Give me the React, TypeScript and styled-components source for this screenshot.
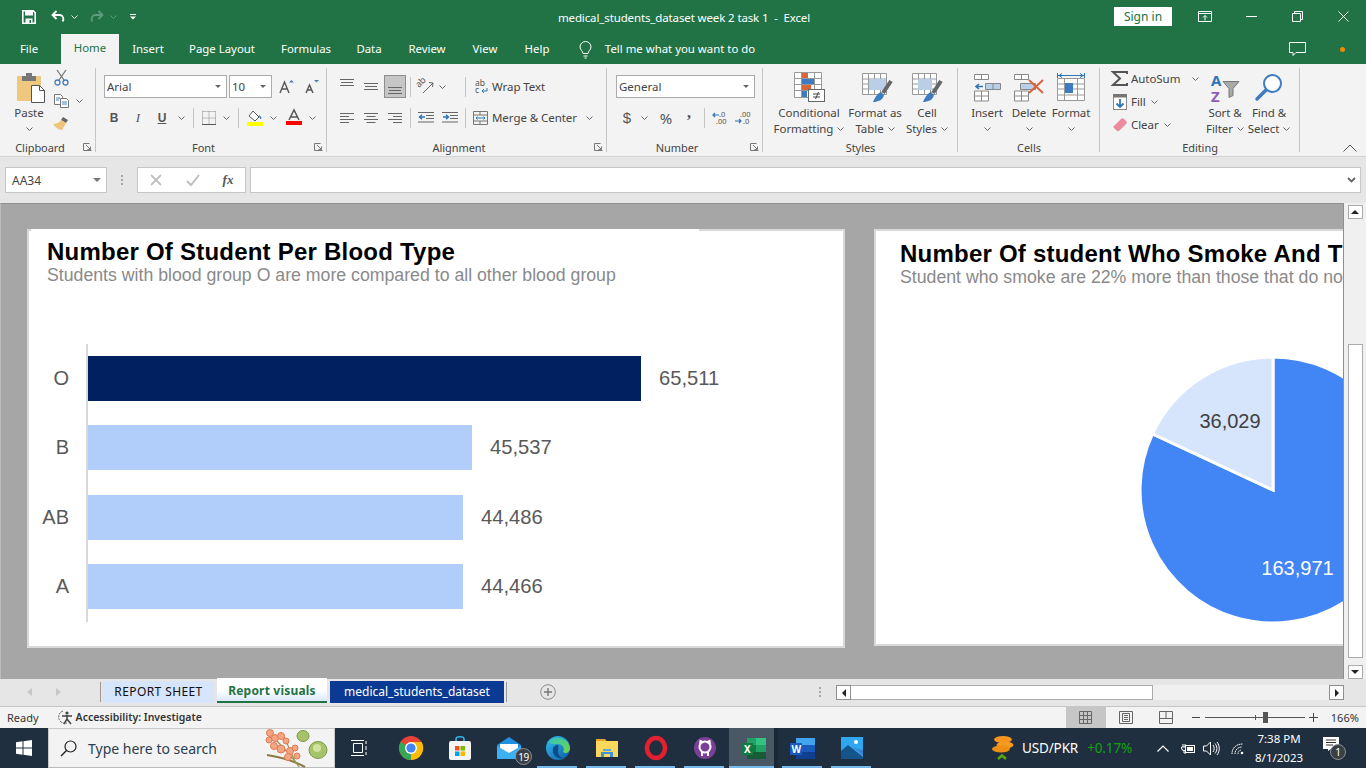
import React from "react";
import styled, { createGlobalStyle } from "styled-components";

const Global = createGlobalStyle`
  html, body { margin: 0; padding: 0; overflow: hidden; background: #e6e6e6; }
  #root { width: 1366px; height: 768px; }
  * { box-sizing: border-box; }
  svg { display: block; flex-shrink: 0; overflow: visible; }
`;
const UI = `"Noto Sans", "Open Sans", sans-serif`;
const Page = styled.div`
  width: 1366px; height: 768px; display: flex; flex-direction: column; overflow: hidden;
  font-family: ${UI}; font-size: 11.5px; color: #333;
`;

/* generic flow slot */
const Slot = styled.div<{ $w: number; $ml?: number }>`
  width: ${(p) => p.$w}px; margin-left: ${(p) => p.$ml ?? 0}px; flex-shrink: 0;
  display: flex; align-items: center; justify-content: center;
`;

/* title bar */
const TitleBar = styled.header`
  height: 35px; background: #217346; display: flex; align-items: center; color: #fff; padding-bottom: 2px;
`;
const QuickTools = styled.div`width: 466px; display: flex; align-items: center; height: 100%; padding-left: 19px;`;
const WindowTitle = styled.div`width: 436px; padding-top: 1px; font-size: 11.5px; text-align: center; white-space: pre; letter-spacing: -0.011em;`;
const SignIn = styled.div`
  width: 58px; height: 19px; margin-left: 212px; background: #fff; color: #217346; display: flex; align-items: center;
  justify-content: center; font-size: 12px;
`;
const TabBar = styled.nav`
  height: 29px; background: #217346; display: flex; align-items: stretch; color: #fff; font-size: 11.4px;
`;
const RibbonTab = styled.div<{ $w: number; $ml: number; $active?: boolean }>`
  width: ${(p) => p.$w}px; margin-left: ${(p) => p.$ml}px; display: flex; align-items: center; justify-content: center;
  white-space: nowrap; flex-shrink: 0; padding-bottom: 3px;
  background: ${(p) => (p.$active ? "#f3f3f3" : "transparent")}; color: ${(p) => (p.$active ? "#217346" : "#fff")};
  margin-top: ${(p) => (p.$active ? "-1px" : "0")};
`;

/* ribbon */
const Ribbon = styled.div`
  height: 93px; background: #f3f3f3; display: flex; border-bottom: 1px solid #d2d2d2; position: relative;
`;
const Group = styled.section<{ $w: number }>`
  width: ${(p) => p.$w}px; flex-shrink: 0; display: flex; flex-direction: column; position: relative;
  &::after { content: ""; position: absolute; right: 0; top: 4px; height: 84px; width: 1px; background: #c6c6c6; }
`;
const GroupBody = styled.div<{ $pl?: number }>`
  height: 76px; padding-left: ${(p) => p.$pl ?? 0}px; padding-top: 11px; display: flex; flex-direction: column; gap: 8px;
`;
const LargeBody = styled.div<{ $pl?: number }>`
  height: 76px; padding-left: ${(p) => p.$pl ?? 0}px; display: flex;
`;
const ClipTools = styled.div`display: flex; flex-direction: column; padding-top: 6px; gap: 8px;`;
const ClipRow = styled.div`display: flex; align-items: center;`;
const Row = styled.div`height: 23px; display: flex; align-items: center;`;
const GroupFoot = styled.footer`height: 16px; display: flex; align-items: center; font-size: 11px; color: #444; padding-bottom: 2px;`;
const GroupName = styled.div`flex: 1; text-align: center; white-space: nowrap; letter-spacing: -0.005em;`;
const Launcher = styled.div`width: 16px; padding-left: 3px;`;
const Combo = styled.div<{ $w: number; $ml?: number }>`
  width: ${(p) => p.$w}px; margin-left: ${(p) => p.$ml ?? 0}px; height: 23px; flex-shrink: 0; background: #fff; border: 1px solid #ababab;
  display: flex; align-items: center; justify-content: space-between; padding: 0 5px 0 2px; font-size: 11.5px; color: #444;
`;
const Caret = styled.div`width: 0; height: 0; border-left: 3px solid transparent; border-right: 3px solid transparent; border-top: 3px solid #666;`;
const NameCaret = styled(Caret)`border-left-width: 4px; border-right-width: 4px; border-top: 4px solid #777; margin-right: 5px;`;
const VSep = styled.div<{ $ml: number }>`width: 1px; height: 20px; background: #c6c6c6; margin-left: ${(p) => p.$ml}px; flex-shrink: 0;`;
const Selected = styled.div<{ $ml: number }>`
  width: 22px; height: 23px; margin-left: ${(p) => p.$ml}px; background: #c6c6c6; border: 1px solid #8e8e8e; display: flex;
  align-items: flex-end; justify-content: center; padding-bottom: 3px; flex-shrink: 0;
`;
const TopSlot = styled(Slot)`align-self: flex-start; padding-top: 4px;`;
const Label = styled.span<{ $ml?: number }>`margin-left: ${(p) => p.$ml ?? 0}px; white-space: nowrap; font-size: 11.5px; color: #444; letter-spacing: -0.005em;`;
const Currency = styled.span`font-family: "Liberation Sans", sans-serif; font-size: 15px; color: #555;`;
const Percent = styled.span`font-size: 15px; color: #555;`;
const Comma = styled.span`font-family: "Liberation Serif", serif; font-weight: 700; font-size: 16px; color: #555; line-height: 10px; margin-bottom: 9px;`;
const FxGlyph = styled.span`font-family: "Liberation Serif", serif; font-style: italic; font-weight: 700; font-size: 13px; color: #555;`;
const Big = styled.div<{ $w: number; $ml?: number }>`
  width: ${(p) => p.$w}px; margin-left: ${(p) => p.$ml ?? 0}px; flex-shrink: 0; display: flex; flex-direction: column; align-items: center;
  padding-top: 8px; text-align: center; color: #444; font-size: 11.5px; line-height: 16px;
`;
const BigIcon = styled.div<{ $shift?: number }>`height: 31px; margin-bottom: 2px; margin-left: ${(p) => p.$shift ?? 0}px; display: flex; align-items: center; justify-content: center;`;
const BigLine = styled.div`display: flex; align-items: center; justify-content: center; gap: 4px; height: 16px; white-space: nowrap; letter-spacing: -0.005em;`;
const EditColumn = styled.div`width: 103px; display: flex; flex-direction: column; padding-top: 3px;`;
const EditRow = styled.div`height: 23px; display: flex; align-items: center; padding-left: 12px;`;
const Collapse = styled.div`position: absolute; right: 9px; bottom: 4px;`;

/* formula bar */
const FormulaBar = styled.div`
  height: 46px; background: #e6e6e6; display: flex; align-items: center; padding-left: 5px;
`;
const FieldBox = styled.div<{ $w: number; $ml?: number }>`
  width: ${(p) => p.$w}px; height: 26px; margin-left: ${(p) => p.$ml ?? 0}px; background: #fff; border: 1px solid #c6c6c6; flex-shrink: 0;
  display: flex; align-items: center; color: #444; font-size: 12px;
`;
const NameText = styled.span`margin-left: 6px; flex: 1;`;
const InputBox = styled(FieldBox)`justify-content: flex-end; padding-right: 4px;`;
const Grip = styled.div<{ $ml: number }>`
  width: 2px; height: 10px; margin-left: ${(p) => p.$ml}px; flex-shrink: 0;
  background: repeating-linear-gradient(#a6a6a6 0 2px, transparent 2px 4px);
`;

/* sheet */
const SheetRow = styled.div`height: 476px; display: flex; background: #f0f0f0;`;
const Canvas = styled.main`
  width: 1344px; height: 476px; background: #a6a6a6; overflow: hidden; display: flex; align-items: flex-start;
  padding: 25px 0 0 26px; gap: 29px; border-top: 1px solid #8f8f8f; border-left: 1px solid #bcbcbc; border-right: 1px solid #8f8f8f;
`;
const Card = styled.article<{ $w: number; $h: number }>`
  width: ${(p) => p.$w}px; height: ${(p) => p.$h}px; flex-shrink: 0; background: #fff; border: 2px solid #d9d9d9;
  font-family: "Liberation Sans", Arial, sans-serif; position: relative;
`;
const CardEdge = styled.div`position: absolute; left: 2px; top: -2px; width: 668px; height: 2px; background: #fff;`;
const CardTitle = styled.h2<{ $pt: number; $pl: number }>`
  margin: 0; padding: ${(p) => p.$pt}px 0 0 ${(p) => p.$pl}px; font-size: 24px; line-height: 28px; font-weight: 700; color: #000; white-space: nowrap; letter-spacing: 0.0094em;
`;
const CardSub = styled.p<{ $pl: number }>`
  margin: 0; padding-left: ${(p) => p.$pl}px; font-size: 17.72px; line-height: 18px; color: #8a8a8a; white-space: nowrap;
`;
const Chart = styled.div`display: flex; flex-direction: column; margin: 60px 0 0 57px; border-left: 2px solid #d9d9d9; padding: 12px 0 13px; gap: 24px; height: 278px; position: relative;`;
const BarRow = styled.div`
  height: 45px; display: flex; align-items: center; position: relative;
  &:nth-child(3) { margin-top: 1px; }
`;
const Bar = styled.div<{ $dark?: boolean }>`height: 45px; background: ${(p) => (p.$dark ? "#00205f" : "#b1cdf9")};`;
const BarValue = styled.span`margin-left: 18px; font-size: 20.2px; color: #595959;`;
const BarName = styled.span`position: absolute; right: calc(100% + 19px); font-size: 20px; color: #595959;`;
const PieBox = styled.div`margin: 69px 0 0 262px; width: 272px;`;

const ScrollV = styled.aside`width: 22px; display: flex; flex-direction: column; align-items: center; padding: 2px 0 0;`;
const ScrollBtn = styled.div`
  width: 15px; height: 14px; background: #fff; border: 1px solid #ababab; display: flex; align-items: center; justify-content: center; flex-shrink: 0;
`;
const ThumbV = styled.div`width: 15px; height: 314px; margin-top: 125px; background: #fff; border: 1px solid #ababab; flex-shrink: 0;`;
const ScrollBtnEnd = styled(ScrollBtn)`margin-top: auto; margin-bottom: 0;`;

/* sheet tabs */
const TabStrip = styled.div`
  height: 28px; background: #e6e6e6; display: flex; align-items: flex-start; border-bottom: 1px solid #c6c6c6; position: relative; font-size: 12px;
`;
const SheetTab = styled.div<{ $w: number; $ml: number; $bg: string; $fg: string; $bold?: boolean; $ls?: number }>`
  width: ${(p) => p.$w}px; margin-left: ${(p) => p.$ml}px; height: 22px; margin-top: 2px; background: ${(p) => p.$bg}; color: ${(p) => p.$fg};
  font-weight: ${(p) => (p.$bold ? 700 : 400)}; letter-spacing: ${(p) => p.$ls ?? 0}px; padding-bottom: 1px;
  display: flex; align-items: center; justify-content: center; flex-shrink: 0; white-space: nowrap;
`;
const ActiveTab = styled(SheetTab)`
  height: 25px; margin-top: -1px; padding-bottom: 0; padding-top: 2px; background: linear-gradient(#fff 55%, #dbe7fb); border-bottom: 2px solid #217346;
`;
const StripSep = styled.div<{ $ml: number }>`width: 1px; height: 20px; margin: 3px 0 0 ${(p) => p.$ml}px; background: #9a9a9a; flex-shrink: 0;`;
const StripItem = styled.div<{ $w: number; $ml: number }>`
  width: ${(p) => p.$w}px; margin-left: ${(p) => p.$ml}px; height: 26px; display: flex; align-items: center; justify-content: center; flex-shrink: 0;
`;
const HScroll = styled.div`width: 508px; margin-left: 15px; margin-top: 6px; height: 15px; display: flex; flex-shrink: 0;`;
const HBtn = styled.div`width: 15px; height: 15px; background: #fff; border: 1px solid #8f8f8f; display: flex; align-items: center; justify-content: center; flex-shrink: 0;`;
const HThumb = styled.div`width: 302px; height: 15px; background: #fff; border: 1px solid #ababab; border-left: 0; flex-shrink: 0;`;
const HTrack = styled.div`flex: 1; background: #f0f0f0;`;

/* status bar */
const StatusBar = styled.div`height: 21px; background: #f3f3f3; display: flex; align-items: center; font-size: 11px; color: #333; padding-bottom: 1px;`;
const StatusText = styled.span<{ $ml: number; $bold?: boolean }>`
  margin-left: ${(p) => p.$ml}px; white-space: nowrap; font-weight: ${(p) => (p.$bold ? 600 : 400)}; font-size: ${(p) => (p.$bold ? "10.5px" : "11px")};
`;
const ViewBtn = styled.div<{ $on?: boolean; $ml?: number }>`
  width: 40px; height: 21px; margin-left: ${(p) => p.$ml ?? 0}px; margin-top: 1px; background: ${(p) => (p.$on ? "#c6c6c6" : "transparent")};
  display: flex; align-items: center; justify-content: center; flex-shrink: 0;
`;
const Zoom = styled.div<{ $ml: number }>`margin-left: ${(p) => p.$ml}px; width: 100px; height: 1px; background: #555; position: relative; flex-shrink: 0;`;
const ZoomThumb = styled.div`position: absolute; left: 58px; top: -5px; width: 5px; height: 11px; background: #555;`;
const ZoomTick = styled.div`position: absolute; left: 50px; top: -2px; width: 1px; height: 5px; background: #555;`;

/* taskbar */
const Taskbar = styled.footer`height: 40px; background: #202f3f; display: flex; align-items: stretch; color: #fff; font-size: 12px;`;
const StartBtn = styled.div`width: 48px; display: flex; align-items: center; justify-content: center;`;
const Search = styled.div`
  width: 287px; background: #f3f3f3; border: 1px solid #c8c8c8; border-bottom-color: #bbb; display: flex; align-items: center; color: #2c3e50; padding-left: 11px; font-size: 14px; position: relative;
`;
const SearchText = styled.span`margin-left: 11px;`;
const SearchArt = styled.div`margin-left: auto; margin-right: 4px;`;
const TaskItem = styled.div<{ $on?: boolean; $active?: boolean; $ml?: number }>`
  width: 49px; margin-left: ${(p) => p.$ml ?? 0}px; display: flex; align-items: center; justify-content: center; position: relative; flex-shrink: 0;
  background: ${(p) => (p.$active ? "linear-gradient(90deg, #4a5866 0 45px, #1a2836 45px)" : "transparent")};
  &::after {
    content: ""; display: ${(p) => (p.$on ? "block" : "none")}; position: absolute; bottom: 0; left: ${(p) => (p.$active ? "0" : "4px")};
    width: ${(p) => (p.$active ? "45px" : "40px")}; height: 2px; background: #76b9ed;
  }
`;
const Badge = styled.div`
  position: absolute; right: 1px; bottom: 3px; width: 17px; height: 17px; border-radius: 50%; background: #3a3f45; border: 1px solid #8b8f94;
  color: #fff; font-size: 10px; display: flex; align-items: center; justify-content: center; letter-spacing: -0.05em;
`;
const Tray = styled.div`margin-left: auto; display: flex; align-items: center; height: 100%; width: 376px; position: relative;`;
const Ticker = styled.span<{ $ml: number; $c: string }>`margin-left: ${(p) => p.$ml}px; color: ${(p) => p.$c}; font-size: 13.5px; white-space: nowrap; letter-spacing: -0.01em;`;
const Clock = styled.div`width: 58px; margin-left: 6px; flex-shrink: 0; text-align: center; line-height: 19px; font-size: 11.5px; white-space: nowrap; display: flex; flex-direction: column; align-items: center;`;
const Notify = styled.div`margin-left: 15px; position: relative; width: 20px; height: 22px;`;
const NotifyBadge = styled.div`
  position: absolute; left: 7px; top: 7px; width: 16px; height: 16px; border-radius: 50%; background: #3a3f45; border: 1px solid #8b8f94; color: #fff; font-size: 10px;
  display: flex; align-items: center; justify-content: center;
`;

/* ---------- icons ---------- */
const Chev = ({ c = "#666" }: { c?: string }) => (
  <svg width="7" height="4" viewBox="0 0 7 4"><path d="M.5.5l3 3 3-3" fill="none" stroke={c} /></svg>
);
const Launch = () => (
  <svg width="9" height="8" viewBox="0 0 9 8"><path d="M8.5 7.5H.5V.5h6M3 2l4 4M7.5 3.5v3h-3" fill="none" stroke="#777" /></svg>
);
const Save = () => (
  <svg width="14" height="14" viewBox="0 0 14 14"><path d="M.8.8h10.4l2 2v10.4H.8z" fill="none" stroke="#fff" strokeWidth="1.6" /><rect x="3" y="1" width="8" height="4.5" fill="#fff" /><rect x="3.5" y="8.5" width="7" height="5" fill="#fff" /><rect x="7.5" y="10" width="1.6" height="3" fill="#217346" /></svg>
);
const Undo = ({ c = "#fff" }: { c?: string }) => (
  <svg width="14" height="13" viewBox="0 0 14 13"><path d="M5.5 1L1.5 5l4 4M1.5 5H9a4 4 0 0 1 2.5 6.5" fill="none" stroke={c} strokeWidth="1.8" /></svg>
);
const Redo = ({ c }: { c: string }) => (
  <svg width="14" height="13" viewBox="0 0 14 13"><path d="M8.5 1l4 4-4 4M12.5 5H5a4 4 0 0 0-2.5 6.5" fill="none" stroke={c} strokeWidth="1.8" /></svg>
);
const Customize = () => (
  <svg width="6" height="6" viewBox="0 0 6 6"><path d="M0 .5h6" stroke="#fff" /><path d="M0 2.5h6L3 5.5z" fill="#fff" /></svg>
);
const DisplayOpts = () => (
  <svg width="14" height="11" viewBox="0 0 14 11"><path d="M.5.5h13v10H.5zM.5 2.5h13M7 9.5V4.5M5 6.5l2-2 2 2" fill="none" stroke="#fff" /></svg>
);
const Minimize = () => <svg width="11" height="1" viewBox="0 0 11 1"><path d="M0 .5h11" stroke="#fff" /></svg>;
const Restore = () => <svg width="11" height="11" viewBox="0 0 11 11"><path d="M.5 2.5h8v8h-8zM2.5 2.5v-2h8v8h-2" fill="none" stroke="#fff" /></svg>;
const CloseX = () => <svg width="11" height="11" viewBox="0 0 11 11"><path d="M.5.5l10 10M10.5.5l-10 10" stroke="#fff" /></svg>;
const Bulb = () => (
  <svg width="13" height="18" viewBox="0 0 13 18"><path d="M4 12.5C4 10 1 9 1 6a5.5 5.5 0 0 1 11 0c0 3-3 4-3 6.500zM4.500 15h4M5.500 17h2" fill="none" stroke="#fff" /></svg>
);
const Comment = () => (
  <svg width="17" height="15" viewBox="0 0 17 15"><path d="M.5.5h16v10H7l-3 3v-3H.5z" fill="none" stroke="#fff" /></svg>
);
const Paste = () => (
  <svg width="28" height="30" viewBox="0 0 28 30"><rect y="3" width="24" height="25" rx="1" fill="#edc87e" /><rect x="5" y="3" width="14" height="5" fill="#777" /><rect x="9" y="0" width="6" height="4" fill="#777" /><path d="M14.5 12.5h8l5 5v12h-13z" fill="#fff" stroke="#555" /><path d="M22.5 12.5v5h5" fill="none" stroke="#555" /></svg>
);
const Cut = () => (
  <svg width="15" height="16" viewBox="0 0 15 16"><path d="M3 0l7 10M12 0L5 10" stroke="#777" strokeWidth="1.3" /><circle cx="3.5" cy="12.5" r="2.5" fill="none" stroke="#4a7ebb" strokeWidth="1.3" /><circle cx="11.5" cy="12.5" r="2.5" fill="none" stroke="#4a7ebb" strokeWidth="1.3" /></svg>
);
const Copy = () => (
  <svg width="15" height="14" viewBox="0 0 15 14"><path d="M.5.5h6l2 2v8H.5z" fill="#fff" stroke="#777" /><path d="M6.5 4.5h6l2 2v7h-8z" fill="#fff" stroke="#777" /><path d="M2 4h4M2 6h3M8 8h5M8 10h5" stroke="#4a7ebb" /></svg>
);
const Painter = () => (
  <svg width="17" height="15" viewBox="0 0 17 15"><path d="M10 1l5 3-2 3-5-3z" fill="#666" /><path d="M8 4l5 3-4 7c-3 0-6-2-9-6 3 0 6-1 8-4z" fill="#eec37a" /></svg>
);
const GrowA = ({ up, s }: { up: boolean; s: number }) => (
  <svg width="16" height="15" viewBox="0 0 16 15">
    <path d={s > 11 ? "M1 14L5.5 3 10 14M2.8 10h5.4" : "M2 14L5.5 6 9 14M3.2 11h4.6"} fill="none" stroke="#555" strokeWidth="1.4" />
    <path d={up ? "M10 3.5L12.5 1 15 3.5z" : "M10 1h5l-2.5 2.5z"} fill="#4a7ebb" />
  </svg>
);
const AlignLines = ({ kind }: { kind: "full" | "left" | "center" | "right" }) => {
  const d = {
    full: "M0 .5h14M1 3.5h12M0 6.5h14",
    left: "M0 .5h14M0 3.5h9M0 6.5h14M0 9.5h9",
    center: "M0 .5h14M2.5 3.5h9M0 6.5h14M2.5 9.5h9",
    right: "M0 .5h14M5 3.5h9M0 6.5h14M5 9.5h9",
  }[kind];
  return <svg width="14" height={kind === "full" ? 7 : 10} viewBox={`0 0 14 ${kind === "full" ? 7 : 10}`}><path d={d} stroke="#666" fill="none" /></svg>;
};
const Orient = () => (
  <svg width="16" height="15" viewBox="0 0 16 15">
    <text x="0" y="0" fontSize="9" fontFamily="Noto Sans" fill="#555" transform="translate(1 9) rotate(-45)">ab</text>
    <path d="M5 14L15 4M11 3.500l4 .500-.5 4" fill="none" stroke="#666" />
  </svg>
);
const Indent = ({ out }: { out: boolean }) => (
  <svg width="16" height="11" viewBox="0 0 16 11">
    <path d="M0 .5h16M8 3.5h8M8 6.5h8M0 10h16" stroke="#666" />
    <path d={out ? "M7 5H2M4 2.8L1.5 5 4 7.2" : "M1 5h5M4 2.8L6.5 5 4 7.2"} fill="none" stroke="#2e75b6" strokeWidth="1.4" />
  </svg>
);
const Bold = styled.b`font-family: "Liberation Sans", sans-serif; font-size: 12px; color: #555;`;
const Ital = styled.i`font-family: "Liberation Serif", serif; font-size: 13px; color: #555;`;
const Under = styled.u`font-family: "Liberation Sans", sans-serif; font-weight: 700; font-size: 12px; color: #555;`;
const Borders = () => (
  <svg width="14" height="14" viewBox="0 0 14 14"><path d="M.5.5h13M.5 7h13M.5.5v13M7 .5v13M13.5.5v13" stroke="#888" strokeDasharray="1 1" fill="none" /><path d="M0 13.5h14" stroke="#555" /></svg>
);
const Fill = () => (
  <svg width="16" height="16" viewBox="0 0 16 16"><path d="M6 1l6 6-4 4-6-5z" fill="#fff" stroke="#555" /><path d="M12 5c2 1 3 3 2 4-1 0-2-2-2-4z" fill="#2e75b6" /><rect y="12" width="16" height="4" fill="#ffff00" /></svg>
);
const FontColor = () => (
  <svg width="16" height="15" viewBox="0 0 16 15"><path d="M3 10L8 0l5 10M5 7h6" fill="none" stroke="#555" strokeWidth="1.5" /><rect y="11" width="16" height="4" fill="#f00" /></svg>
);
const Wrap = () => (
  <svg width="13" height="15" viewBox="0 0 13 15"><text x="0" y="7" fontSize="8.5" fontFamily="Noto Sans" fill="#555">ab</text><text x="0" y="14" fontSize="8.5" fontFamily="Noto Sans" fill="#555">c</text><path d="M12 9v3H7M9 10l-2 2 2 2" fill="none" stroke="#2e75b6" /></svg>
);
const Merge = () => (
  <svg width="15" height="14" viewBox="0 0 15 14"><path d="M.5.5h14v13H.5zM.5 4h14M.5 10h14M7 .5V4M7 10v3.5" fill="none" stroke="#777" /><path d="M3 7h9M4.5 5.5L3 7l1.5 1.5M10.5 5.5L12 7l-1.5 1.5" fill="none" stroke="#2e75b6" /></svg>
);
const DecInc = ({ flip }: { flip: boolean }) => (
  <svg width="16" height="14" viewBox="0 0 16 14">
    <text x={flip ? 5 : 7} y="6" fontSize="7.5" fontFamily="Noto Sans" fill="#555">{flip ? ".00" : ".0"}</text>
    <text x={flip ? 8 : 4} y="13" fontSize="7.5" fontFamily="Noto Sans" fill="#555">{flip ? ".0" : ".00"}</text>
    <path d={flip ? "M0 10h6M4 8l2 2-2 2" : "M1 4h6M3 2L1 4l2 2"} fill="none" stroke="#2e75b6" strokeWidth="1.2" />
  </svg>
);
const CondFmt = () => (
  <svg width="31" height="31" viewBox="0 0 31 31">
    <path d="M.5.5h27v25H.5zM.5 6.5h27M.5 12.5h27M.5 18.500h27M7.500.5v25M20.500.5v25" fill="#fff" stroke="#999" />
    <rect x="8" y="1" width="6" height="5" fill="#d9653b" /><rect x="8" y="7" width="12" height="5" fill="#3f7cbf" /><rect x="8" y="13" width="9" height="5" fill="#d9653b" /><rect x="8" y="19" width="5" height="6" fill="#3f7cbf" />
    <rect x="14.5" y="17.5" width="16" height="12" fill="#fff" stroke="#666" /><path d="M19 22h7M19 25h7M24.5 20l-3 7" stroke="#444" />
  </svg>
);
const FmtTable = ({ pale }: { pale?: boolean }) => (
  <svg width="30" height="30" viewBox="0 0 30 30">
    <path d="M.5.5h24v21H.5zM.5 6h24M.5 11h24M.5 16h24M6.500.5v21M12.500.5v21M18.500.5v21" fill="#fff" stroke="#999" />
    <rect x={pale ? 6 : 7} y="6" width={pale ? 14 : 17} height="11" fill="#b9cfe8" />
    <path d="M29 8l-8 12" stroke="#666" strokeWidth="4" /><path d="M19 19c-3 1-6 5-8 10 5 0 10-2 11-7z" fill="#3f7cbf" />
  </svg>
);
const Insert = () => (
  <svg width="27" height="28" viewBox="0 0 27 28"><path d="M.5.5h14v5H.5zM7.500.5v5M.5 17h14v10H.5zM.5 22h14M7.500 17v10" fill="#fff" stroke="#888" /><path d="M11.500 9.500h15v6h-15zM19 9.500v6" fill="#b9cfe8" stroke="#888" /><path d="M9 12.500H2M5 10l-3 2.500L5 15" fill="none" stroke="#2e75b6" strokeWidth="1.6" /></svg>
);
const Delete = () => (
  <svg width="30" height="28" viewBox="0 0 30 28"><path d="M.5.5h14v5H.5zM7.500.5v5M.5 17h14v10H.5zM.5 22h14M7.500 17v10" fill="#fff" stroke="#888" /><path d="M6.500 9.500h15v6h-15z" fill="#b9cfe8" stroke="#888" /><path d="M15 6l14 13M29 6L15 19" stroke="#d9653b" strokeWidth="2" /></svg>
);
const Format = () => (
  <svg width="28" height="31" viewBox="0 0 28 31"><path d="M.5 1v5M27.500 1v5M1 3.500h26M5 1.500L2 3.500l3 2M23 1.500l3 2-3 2" fill="none" stroke="#2e75b6" /><path d="M.5 6.500h27v22H.5zM.5 12h27M.5 17h27M.5 23h27M7.500 6.500v22M20.500 6.500v22" fill="#fff" stroke="#999" /><rect x="8" y="11" width="8" height="10" fill="#3f7cbf" /></svg>
);
const Sigma = () => (
  <svg width="16" height="15" viewBox="0 0 16 15"><path d="M15 3V1H1l7 6.500L1 14h14v-2" fill="none" stroke="#555" strokeWidth="2" /></svg>
);
const FillDown = () => (
  <svg width="14" height="16" viewBox="0 0 14 16"><rect x=".5" y=".5" width="13" height="15" fill="#fff" stroke="#888" /><rect x="0" y="0" width="14" height="3.500" fill="#777" /><path d="M7 5v8M3.500 9.500L7 13l3.500-3.500" fill="none" stroke="#2e75b6" strokeWidth="1.8" /></svg>
);
const Eraser = () => (
  <svg width="14" height="13" viewBox="0 0 14 13"><path d="M0 9l8-8c1-1 2-1 3 0l2 2c1 1 1 2 0 3l-7 7H4z" fill="#ec8ba0" /></svg>
);
const SortIcon = () => (
  <svg width="30" height="30" viewBox="0 0 30 30">
    <text x="1" y="13" fontSize="15" fontWeight="700" fontFamily="Noto Sans" fill="#2e75b6">A</text>
    <text x="1" y="29" fontSize="15" fontWeight="700" fontFamily="Noto Sans" fill="#8e5cb5">Z</text>
    <path d="M13 8.500h16l-6 7v7l-4 2v-9z" fill="#a9a9a9" stroke="#777" />
  </svg>
);
const FindIcon = () => (
  <svg width="28" height="29" viewBox="0 0 28 29"><circle cx="17.500" cy="10.500" r="8.500" fill="#fff" stroke="#3f7cbf" strokeWidth="2" /><path d="M11 17L2 26" stroke="#3f7cbf" strokeWidth="3.500" strokeLinecap="round" /></svg>
);
const BlackArrow = ({ d }: { d: "u" | "d" | "l" | "r" }) => (
  <svg width="8" height="8" viewBox="0 0 8 8">
    <path fill="#222" d={{ u: "M0 6l4-4 4 4z", d: "M0 2l4 4 4-4z", l: "M6 0L2 4l4 4z", r: "M2 0l4 4-4 4z" }[d]} />
  </svg>
);
const Plus = () => (
  <svg width="16" height="16" viewBox="0 0 16 16"><circle cx="8" cy="8" r="7.300" fill="none" stroke="#8a8a8a" /><path d="M4 8h8M8 4v8" stroke="#777" strokeWidth="1.400" /></svg>
);
const Access = () => (
  <svg width="17" height="15" viewBox="0 0 17 15"><path d="M6 1a6 6 0 1 0 4 12" fill="none" stroke="#555" strokeDasharray="2 1" /><circle cx="10" cy="3" r="1.600" fill="#444" /><path d="M5 6h10M10 5v4l-3 5M10 9l4 5" stroke="#444" strokeWidth="1.500" fill="none" /></svg>
);
const GridView = () => <svg width="13" height="13" viewBox="0 0 13 13"><path d="M.5.5h12v12H.5zM4.500.5v12M8.500.5v12M.5 4.500h12M.5 8.500h12" fill="none" stroke="#666" /></svg>;
const PageView = () => <svg width="14" height="13" viewBox="0 0 14 13"><path d="M.5.5h13v12H.5zM3.500 2.500h7v8h-7zM5 4.500h4M5 6.500h4M5 8.500h4" fill="none" stroke="#666" /></svg>;
const BreakView = () => <svg width="14" height="13" viewBox="0 0 14 13"><path d="M.5.5h13v12H.5zM.5 7.500h13M7 .5v7" fill="none" stroke="#666" /></svg>;
const Win = () => (
  <svg width="16" height="16" viewBox="0 0 16 16"><path d="M0 2.300L6.500 1.300v6.200H0zM7.500 1.200L16 0v7.500H7.500zM0 8.500h6.500v6.200L0 13.700zM7.500 8.500H16V16l-8.500-1.200z" fill="#fff" /></svg>
);
const Magnifier = () => (
  <svg width="17" height="17" viewBox="0 0 17 17"><circle cx="10.500" cy="6.500" r="5.500" fill="none" stroke="#222" strokeWidth="1.200" /><path d="M6.500 10.500L1 16" stroke="#222" strokeWidth="1.400" /></svg>
);
const Flower = () => (
  <svg width="66" height="38" viewBox="0 0 66 38">
    <path d="M3 26c14 2 27 6 38 12" fill="none" stroke="#8a7b45" strokeWidth="2" />
    <path d="M9 8c8 8 18 18 26 30M20 8c4 8 8 18 12 26" fill="none" stroke="#8e9a5a" strokeWidth="1.200" />
    {[[6, 4, 3.500], [11, 9, 3.500], [5, 11, 3], [17, 7, 3.500], [22, 12, 3], [10, 17, 3.500], [17, 20, 4], [26, 22, 3.500], [31, 19, 3], [24, 28, 3.500], [33, 27, 3]].map(([x, y, r], i) => (
      <circle key={i} cx={x} cy={y} r={r} fill="#f3a684" stroke="#e37a50" />
    ))}
    <ellipse cx="39" cy="7" rx="6" ry="5.500" fill="#a8c26a" stroke="#7f9b4a" />
    <ellipse cx="54" cy="21" rx="9" ry="8.500" fill="#a6c46a" stroke="#7c9a4a" />
    <ellipse cx="53" cy="19" rx="4" ry="4" fill="#d2e2a0" />
  </svg>
);
const TaskView = () => (
  <svg width="17" height="16" viewBox="0 0 17 16"><path d="M0 .5h13M0 15.500h13M2.500 3.500h9v9h-9zM15 1v3M15 6v4M15 12v3" fill="none" stroke="#fff" /></svg>
);
const Chrome = () => (
  <svg width="24" height="24" viewBox="0 0 24 24"><circle cx="12" cy="12" r="12" fill="#ea4335" /><path d="M12 12L1.600 18A12 12 0 0 0 12 24l6-5z" fill="#34a853" /><path d="M12 6h10.600A12 12 0 0 1 12 24z" fill="#fbbc05" /><path d="M12 12L1.600 18A12 12 0 0 1 1.600 6z" fill="#34a853" /><circle cx="12" cy="12" r="6" fill="#fff" /><circle cx="12" cy="12" r="4.600" fill="#4285f4" /></svg>
);
const Store = () => (
  <svg width="22" height="24" viewBox="0 0 22 24"><path d="M7 6V3c0-3 8-3 8 0v3" fill="none" stroke="#35b7f0" strokeWidth="1.600" /><rect y="5" width="22" height="19" rx="2" fill="#f4f4f4" /><rect x="6" y="10" width="4.500" height="4.500" fill="#f25022" /><rect x="11.500" y="10" width="4.500" height="4.500" fill="#7fba00" /><rect x="6" y="15.500" width="4.500" height="4.500" fill="#00a4ef" /><rect x="11.500" y="15.500" width="4.500" height="4.500" fill="#ffb900" /></svg>
);
const Mail = () => (
  <svg width="24" height="22" viewBox="0 0 24 22"><path d="M12 0l12 8v14H0V8z" fill="#1e90e0" /><path d="M3 7h18v5l-9 5-9-5z" fill="#fff" /><path d="M0 9l12 7 12-7v13H0z" fill="#3db0f2" /></svg>
);
const Edge = () => (
  <svg width="24" height="24" viewBox="0 0 24 24"><defs><linearGradient id="eg" x1="0" y1="0" x2="1" y2="1"><stop offset="0" stopColor="#35c1f1" /><stop offset="1" stopColor="#0c59a4" /></linearGradient><linearGradient id="eg2" x1="0" y1="0" x2="1" y2="1"><stop offset="0" stopColor="#32c6ba" /><stop offset="1" stopColor="#6fd34b" /></linearGradient></defs><circle cx="12" cy="12" r="12" fill="url(#eg)" /><path d="M3 6A12 12 0 0 1 24 12c0 5-5 6-7 4 2-3 0-8-5-8-4 0-7 1-9-2z" fill="url(#eg2)" /><path d="M12 9c-4 0-6 3-5 7 1 5 6 7 10 6-3-1-5-3-5-6 0-3 1-5 0-7z" fill="#0c4c8a" /></svg>
);
const Folder = () => (
  <svg width="22" height="18" viewBox="0 0 22 18"><path d="M0 0h9l2 2.500H0z" fill="#e2a72c" /><rect y="2" width="22" height="16" fill="#fbd75c" /><rect x="7" y="10" width="8" height="2" fill="#58a9e0" /><path d="M5 18v-5h12v5h-3v-3H8v3z" fill="#3b93d9" /></svg>
);
const Opera = () => (
  <svg width="22" height="24" viewBox="0 0 22 24"><ellipse cx="11" cy="12" rx="9" ry="10" fill="none" stroke="#e5202e" strokeWidth="4.500" /></svg>
);
const Github = () => (
  <svg width="22" height="22" viewBox="0 0 22 22"><circle cx="11" cy="11" r="11" fill="#7b3f98" /><circle cx="11" cy="10" r="5.500" fill="none" stroke="#fff" strokeWidth="2" /><path d="M6 7l.5-3 3 1.500M16 7l-.5-3-3 1.500M8 15v4M14 15v4" stroke="#fff" strokeWidth="2" fill="none" /></svg>
);
const ExcelIcon = () => (
  <svg width="25" height="21" viewBox="0 0 25 21"><rect x="6" width="19" height="21" fill="#21a366" /><rect x="6" y="7" width="19" height="7" fill="#107c41" /><rect x="6" y="14" width="19" height="7" fill="#185c37" /><rect x="15" width="10" height="7" fill="#33c481" /><rect x="15" y="7" width="10" height="7" fill="#21a366" /><rect y="5" width="12" height="12" fill="#107c41" /><text x="3" y="15" fontSize="10" fontWeight="700" fontFamily="Noto Sans" fill="#fff">X</text></svg>
);
const WordIcon = () => (
  <svg width="25" height="21" viewBox="0 0 25 21"><rect x="6" width="19" height="21" fill="#2b7cd3" /><rect x="6" y="7" width="19" height="7" fill="#185abd" /><rect x="6" y="14" width="19" height="7" fill="#103f91" /><rect x="6" width="19" height="7" fill="#41a5ee" /><rect y="5" width="12" height="12" fill="#185abd" /><text x="1.500" y="15" fontSize="10" fontWeight="700" fontFamily="Noto Sans" fill="#fff">W</text></svg>
);
const Photos = () => (
  <svg width="22" height="22" viewBox="0 0 22 22"><rect width="22" height="22" fill="#2ea7ee" /><circle cx="15" cy="5" r="2" fill="#fff" /><path d="M0 14l7-6 15 12v2H0z" fill="#16548c" /><path d="M12 11l4 2 6 6v-6z" fill="#3d7fd3" /></svg>
);
const Coins = () => (
  <svg width="23" height="24" viewBox="0 0 23 24"><ellipse cx="12" cy="3.500" rx="9" ry="3.500" fill="#f7941d" /><ellipse cx="14" cy="9" rx="8.500" ry="3.500" fill="#f59b20" /><ellipse cx="10" cy="13" rx="9" ry="3.500" fill="#ed8f17" /><path d="M7 23l4-3.500 4 3.500" fill="none" stroke="#5aa70e" strokeWidth="2.500" /></svg>
);
const Up = () => <svg width="12" height="7" viewBox="0 0 12 7"><path d="M.5 6.500L6 1l5.500 5.500" fill="none" stroke="#fff" strokeWidth="1.200" /></svg>;
const Battery = () => (
  <svg width="16" height="11" viewBox="0 0 16 11"><path d="M3 1v3M5 1v3M1.500 4h5v1a2 2 0 0 1-5 0zM4 7v3h2" fill="none" stroke="#fff" /><rect x="5.500" y="2.500" width="9" height="7" fill="#202f3f" stroke="#fff" /><rect x="7" y="4" width="6" height="4" fill="#fff" /></svg>
);
const Volume = () => (
  <svg width="16" height="15" viewBox="0 0 16 15"><path d="M.5 5h3l4-4v13l-4-4h-3z" fill="none" stroke="#fff" /><path d="M10 4c1.500 2 1.500 5 0 7M12 2.500c2.500 3 2.500 7 0 10M14 1c3 4 3 9 0 13" fill="none" stroke="#fff" /></svg>
);
const Wifi = () => (
  <svg width="13" height="13" viewBox="0 0 13 13"><circle cx="11" cy="11" r="1.300" fill="#fff" /><path d="M7 12a4 4 0 0 1 3-4M4 12c0-4 3-7 7-7M1 12C1 6 5 2 12 2" fill="none" stroke="#fff" strokeDasharray="1.500 .6" /></svg>
);
const Note = () => (
  <svg width="16" height="14" viewBox="0 0 16 14"><path d="M0 0h16v12h-8L5 14v-2H0z" fill="#fff" /><path d="M3 3h10M3 5.500h10M3 8h7" stroke="#333" /></svg>
);

const bars = [
  { n: "O", v: "65,511", w: 553, dark: true },
  { n: "B", v: "45,537", w: 384 },
  { n: "AB", v: "44,486", w: 375 },
  { n: "A", v: "44,466", w: 375 },
];

export default function App() {
  return (
    <Page>
      <Global />
      <TitleBar>
        <QuickTools>
          <Slot $w={20}><Save /></Slot>
          <Slot $w={20} $ml={9}><Undo /></Slot>
          <Slot $w={7} $ml={3}><Chev c="#dfeee5" /></Slot>
          <Slot $w={20} $ml={9}><Redo c="#5f9b7d" /></Slot>
          <Slot $w={7} $ml={3}><Chev c="#5f9b7d" /></Slot>
          <Slot $w={8} $ml={12}><Customize /></Slot>
        </QuickTools>
        <WindowTitle>medical_students_dataset week 2 task 1  -  Excel</WindowTitle>
        <SignIn>Sign in</SignIn>
        <Slot $w={14} $ml={26}><DisplayOpts /></Slot>
        <Slot $w={11} $ml={34}><Minimize /></Slot>
        <Slot $w={11} $ml={35}><Restore /></Slot>
        <Slot $w={11} $ml={35}><CloseX /></Slot>
      </TitleBar>
      <TabBar>
        <RibbonTab $w={30} $ml={14}>File</RibbonTab>
        <RibbonTab $w={58} $ml={17} $active>Home</RibbonTab>
        <RibbonTab $w={40} $ml={9}>Insert</RibbonTab>
        <RibbonTab $w={70} $ml={19}>Page Layout</RibbonTab>
        <RibbonTab $w={54} $ml={22}>Formulas</RibbonTab>
        <RibbonTab $w={30} $ml={21}>Data</RibbonTab>
        <RibbonTab $w={42} $ml={22}>Review</RibbonTab>
        <RibbonTab $w={30} $ml={22}>View</RibbonTab>
        <RibbonTab $w={30} $ml={22}>Help</RibbonTab>
        <Slot $w={13} $ml={27}><Bulb /></Slot>
        <RibbonTab $w={152} $ml={12}>Tell me what you want to do</RibbonTab>
        <Slot $w={17} $ml={533}><Comment /></Slot>
        <Slot $w={5} $ml={34}><svg width="5" height="5" viewBox="0 0 5 5"><circle cx="2.500" cy="2.500" r="2.500" fill="#f08c00" /></svg></Slot>
      </TabBar>
      <Ribbon>
        <Group $w={96}>
          <LargeBody $pl={7}>
            <Big $w={44}>
              <BigIcon $shift={4}><Paste /></BigIcon>
              <BigLine>Paste</BigLine>
              <BigLine><Chev /></BigLine>
            </Big>
            <ClipTools>
              <Slot $w={18} $ml={1}><Cut /></Slot>
              <ClipRow><Slot $w={18} $ml={1}><Copy /></Slot><Slot $w={7} $ml={6}><Chev /></Slot></ClipRow>
              <Slot $w={18} $ml={1}><Painter /></Slot>
            </ClipTools>
          </LargeBody>
          <GroupFoot><GroupName>Clipboard</GroupName><Launcher><Launch /></Launcher></GroupFoot>
        </Group>
        <Group $w={231}>
          <GroupBody $pl={8}>
            <Row>
              <Combo $w={123}>Arial<Caret /></Combo>
              <Combo $w={43} $ml={2}>10<Caret /></Combo>
              <Slot $w={16} $ml={7}><GrowA up s={13} /></Slot>
              <Slot $w={16} $ml={9}><GrowA up={false} s={10} /></Slot>
            </Row>
            <Row>
              <Slot $w={20}><Bold>B</Bold></Slot>
              <Slot $w={20} $ml={4}><Ital>I</Ital></Slot>
              <Slot $w={20} $ml={4}><Under>U</Under></Slot>
              <Slot $w={7} $ml={6}><Chev /></Slot>
              <VSep $ml={8} />
              <Slot $w={14} $ml={8}><Borders /></Slot>
              <Slot $w={7} $ml={7}><Chev /></Slot>
              <VSep $ml={8} />
              <Slot $w={16} $ml={8}><Fill /></Slot>
              <Slot $w={7} $ml={7}><Chev /></Slot>
              <Slot $w={16} $ml={9}><FontColor /></Slot>
              <Slot $w={7} $ml={7}><Chev /></Slot>
            </Row>
          </GroupBody>
          <GroupFoot><GroupName>Font</GroupName><Launcher><Launch /></Launcher></GroupFoot>
        </Group>
        <Group $w={280}>
          <GroupBody $pl={13}>
            <Row>
              <TopSlot $w={14}><AlignLines kind="full" /></TopSlot>
              <Slot $w={14} $ml={10}><AlignLines kind="full" /></Slot>
              <Selected $ml={6}><AlignLines kind="full" /></Selected>
              <VSep $ml={4} />
              <Slot $w={16} $ml={7}><Orient /></Slot>
              <Slot $w={7} $ml={5}><Chev /></Slot>
              <VSep $ml={19} />
              <Slot $w={13} $ml={9}><Wrap /></Slot>
              <Label $ml={4}>Wrap Text</Label>
            </Row>
            <Row>
              <Slot $w={14}><AlignLines kind="left" /></Slot>
              <Slot $w={14} $ml={10}><AlignLines kind="center" /></Slot>
              <Slot $w={14} $ml={10}><AlignLines kind="right" /></Slot>
              <VSep $ml={8} />
              <Slot $w={16} $ml={7}><Indent out /></Slot>
              <Slot $w={16} $ml={8}><Indent out={false} /></Slot>
              <VSep $ml={7} />
              <Slot $w={15} $ml={7}><Merge /></Slot>
              <Label $ml={4}>Merge &amp; Center</Label>
              <Slot $w={7} $ml={9}><Chev /></Slot>
            </Row>
          </GroupBody>
          <GroupFoot><GroupName>Alignment</GroupName><Launcher><Launch /></Launcher></GroupFoot>
        </Group>
        <Group $w={156}>
          <GroupBody $pl={9}>
            <Row><Combo $w={139}>General<Caret /></Combo></Row>
            <Row>
              <Slot $w={12} $ml={5}><Currency>$</Currency></Slot>
              <Slot $w={7} $ml={8}><Chev /></Slot>
              <Slot $w={14} $ml={11}><Percent>%</Percent></Slot>
              <Slot $w={8} $ml={12}><Comma>,</Comma></Slot>
              <VSep $ml={11} />
              <Slot $w={16} $ml={7}><DecInc flip={false} /></Slot>
              <Slot $w={16} $ml={7}><DecInc flip /></Slot>
            </Row>
          </GroupBody>
          <GroupFoot><GroupName>Number</GroupName><Launcher><Launch /></Launcher></GroupFoot>
        </Group>
        <Group $w={195}>
          <LargeBody $pl={9}>
            <Big $w={74}>
              <BigIcon><CondFmt /></BigIcon>
              <BigLine>Conditional</BigLine>
              <BigLine>Formatting <Chev /></BigLine>
            </Big>
            <Big $w={58}>
              <BigIcon $shift={3}><FmtTable /></BigIcon>
              <BigLine>Format as</BigLine>
              <BigLine>Table <Chev /></BigLine>
            </Big>
            <Big $w={46}>
              <BigIcon><FmtTable pale /></BigIcon>
              <BigLine>Cell</BigLine>
              <BigLine>Styles <Chev /></BigLine>
            </Big>
          </LargeBody>
          <GroupFoot><GroupName>Styles</GroupName></GroupFoot>
        </Group>
        <Group $w={142}>
          <LargeBody $pl={8}>
            <Big $w={42}>
              <BigIcon><Insert /></BigIcon>
              <BigLine>Insert</BigLine>
              <BigLine><Chev /></BigLine>
            </Big>
            <Big $w={42}>
              <BigIcon><Delete /></BigIcon>
              <BigLine>Delete</BigLine>
              <BigLine><Chev /></BigLine>
            </Big>
            <Big $w={42}>
              <BigIcon><Format /></BigIcon>
              <BigLine>Format</BigLine>
              <BigLine><Chev /></BigLine>
            </Big>
          </LargeBody>
          <GroupFoot><GroupName>Cells</GroupName></GroupFoot>
        </Group>
        <Group $w={200}>
          <LargeBody>
            <EditColumn>
              <EditRow><Slot $w={16}><Sigma /></Slot><Label $ml={3}>AutoSum</Label><Slot $w={7} $ml={12}><Chev /></Slot></EditRow>
              <EditRow><Slot $w={16}><FillDown /></Slot><Label $ml={3}>Fill</Label><Slot $w={7} $ml={5}><Chev /></Slot></EditRow>
              <EditRow><Slot $w={16}><Eraser /></Slot><Label $ml={3}>Clear</Label><Slot $w={7} $ml={5}><Chev /></Slot></EditRow>
            </EditColumn>
            <Big $w={44}>
              <BigIcon><SortIcon /></BigIcon>
              <BigLine>Sort &amp;</BigLine>
              <BigLine>Filter <Chev /></BigLine>
            </Big>
            <Big $w={44}>
              <BigIcon><FindIcon /></BigIcon>
              <BigLine>Find &amp;</BigLine>
              <BigLine>Select <Chev /></BigLine>
            </Big>
          </LargeBody>
          <GroupFoot><GroupName>Editing</GroupName></GroupFoot>
        </Group>
        <Collapse><svg width="14" height="8" viewBox="0 0 14 8"><path d="M.5 7.500L7 1l6.500 6.500" fill="none" stroke="#555" /></svg></Collapse>
      </Ribbon>
      <FormulaBar>
        <FieldBox $w={102}>
          <NameText>AA34</NameText>
          <NameCaret />
        </FieldBox>
        <Grip $ml={14} />
        <FieldBox $w={109} $ml={14}>
          <Slot $w={12} $ml={12}><svg width="12" height="12" viewBox="0 0 12 12"><path d="M1 1l10 10M11 1L1 11" stroke="#bfbfbf" strokeWidth="1.800" /></svg></Slot>
          <Slot $w={14} $ml={24}><svg width="14" height="12" viewBox="0 0 14 12"><path d="M1 7l4 4 8-10" fill="none" stroke="#bfbfbf" strokeWidth="2" /></svg></Slot>
          <Slot $w={14} $ml={21}><FxGlyph>fx</FxGlyph></Slot>
        </FieldBox>
        <InputBox $w={1111} $ml={4}>
          <svg width="9" height="6" viewBox="0 0 9 6"><path d="M1 1l3.500 3.500L8 1" fill="none" stroke="#666" strokeWidth="1.800" /></svg>
        </InputBox>
      </FormulaBar>
      <SheetRow>
        <Canvas>
          <Card $w={818} $h={419}>
            <CardEdge />
            <CardTitle $pt={7} $pl={18}>Number Of Student Per Blood Type</CardTitle>
            <CardSub $pl={18}>Students with blood group O are more compared to all other blood group</CardSub>
            <Chart>
              {bars.map((b) => (
                <BarRow key={b.n}>
                  <BarName>{b.n}</BarName>
                  <Bar $dark={b.dark} style={{ width: b.w }} />
                  <BarValue>{b.v}</BarValue>
                </BarRow>
              ))}
            </Chart>
          </Card>
          <Card $w={640} $h={417}>
            <CardTitle $pt={9} $pl={24}>Number Of student Who Smoke And Those Who Do Not</CardTitle>
            <CardSub $pl={24}>Student who smoke are 22% more than those that do not smoke</CardSub>
            <PieBox>
              <svg width="270" height="270" viewBox="0 0 270 270">
                <path d="M135 135V2A133 133 0 1 1 14.500 78.800Z" fill="#4285f4" stroke="#fff" strokeWidth="3" />
                <path d="M135 135L14.500 78.800A133 133 0 0 1 135 2Z" fill="#d6e4fc" stroke="#fff" strokeWidth="3" />
                <text x="92" y="73" fontSize="20" textAnchor="middle" fill="#404040" fontFamily="Liberation Sans">36,029</text>
                <text x="159.500" y="220" fontSize="20" textAnchor="middle" fill="#fff" fontFamily="Liberation Sans">163,971</text>
              </svg>
            </PieBox>
          </Card>
        </Canvas>
        <ScrollV>
          <ScrollBtn><BlackArrow d="u" /></ScrollBtn>
          <ThumbV />
          <ScrollBtnEnd><BlackArrow d="d" /></ScrollBtnEnd>
        </ScrollV>
      </SheetRow>
      <TabStrip>
        <StripItem $w={8} $ml={25}><svg width="5" height="8" viewBox="0 0 5 8"><path d="M5 0L0 4l5 4z" fill="#c6c6c6" /></svg></StripItem>
        <StripItem $w={8} $ml={21}><svg width="5" height="8" viewBox="0 0 5 8"><path d="M0 0l5 4-5 4z" fill="#c6c6c6" /></svg></StripItem>
        <StripSep $ml={38} />
        <SheetTab $w={111} $ml={2} $bg="#d6e4fc" $fg="#111" $ls={0.4}>REPORT SHEET</SheetTab>
        <ActiveTab $w={110} $ml={3} $bg="#fff" $fg="#217346" $bold $ls={0.2}>Report visuals</ActiveTab>
        <SheetTab $w={174} $ml={3} $bg="#0b3a94" $fg="#fff">medical_students_dataset</SheetTab>
        <StripSep $ml={2} />
        <StripItem $w={16} $ml={33}><Plus /></StripItem>
        <StripItem $w={2} $ml={263}><Grip $ml={0} /></StripItem>
        <HScroll>
          <HBtn><BlackArrow d="l" /></HBtn>
          <HThumb />
          <HTrack />
          <HBtn><BlackArrow d="r" /></HBtn>
        </HScroll>
      </TabStrip>
      <StatusBar>
        <StatusText $ml={7}>Ready</StatusText>
        <Slot $w={17} $ml={18}><Access /></Slot>
        <StatusText $ml={2} $bold>Accessibility: Investigate</StatusText>
        <ViewBtn $on $ml={864}><GridView /></ViewBtn>
        <ViewBtn><PageView /></ViewBtn>
        <ViewBtn><BreakView /></ViewBtn>
        <Slot $w={8} $ml={6}><svg width="8" height="1" viewBox="0 0 8 1"><path d="M0 .5h8" stroke="#444" /></svg></Slot>
        <Zoom $ml={5}><ZoomTick /><ZoomThumb /></Zoom>
        <Slot $w={9} $ml={4}><svg width="9" height="9" viewBox="0 0 9 9"><path d="M0 4.500h9M4.500 0v9" stroke="#444" /></svg></Slot>
        <StatusText $ml={13}>166%</StatusText>
      </StatusBar>
      <Taskbar>
        <StartBtn><Win /></StartBtn>
        <Search>
          <Magnifier />
          <SearchText>Type here to search</SearchText>
          <SearchArt><Flower /></SearchArt>
        </Search>
        <TaskItem><TaskView /></TaskItem>
        <TaskItem $ml={2}><Chrome /></TaskItem>
        <TaskItem><Store /></TaskItem>
        <TaskItem><Mail /><Badge>19</Badge></TaskItem>
        <TaskItem $on><Edge /></TaskItem>
        <TaskItem $on><Folder /></TaskItem>
        <TaskItem $on><Opera /></TaskItem>
        <TaskItem $on><Github /></TaskItem>
        <TaskItem $on $active><ExcelIcon /></TaskItem>
        <TaskItem $on><WordIcon /></TaskItem>
        <TaskItem $on><Photos /></TaskItem>
        <Tray>
          <Slot $w={23} $ml={1}><Coins /></Slot>
          <Ticker $ml={8} $c="#fff">USD/PKR</Ticker>
          <Ticker $ml={9} $c="#13a10e">+0.17%</Ticker>
          <Slot $w={12} $ml={25}><Up /></Slot>
          <Slot $w={16} $ml={11}><Battery /></Slot>
          <Slot $w={16} $ml={7}><Volume /></Slot>
          <Slot $w={13} $ml={12}><Wifi /></Slot>
          <Clock><span>7:38 PM</span><span>8/1/2023</span></Clock>
          <Notify><Note /><NotifyBadge>1</NotifyBadge></Notify>
        </Tray>
      </Taskbar>
    </Page>
  );
}
